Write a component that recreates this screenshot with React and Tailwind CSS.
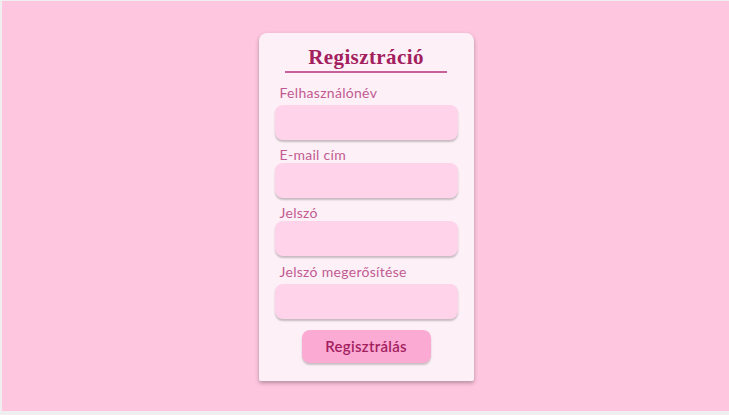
import { useState } from 'react';

const labelCls =
  "block pl-[5px] text-[14px] leading-[16px] font-normal text-[#c25a92] tracking-[0.3px]";
const inputCls =
  "block w-full h-[35px] rounded-[8px] bg-[#ffd4ea] shadow-[0_2px_2px_rgba(0,0,0,0.22)] outline-none px-3 text-[14px] text-[#a3205f]";

export default function App() {
  const [form, setForm] = useState({ user: '', email: '', pass: '', pass2: '' });

  const update = (key) => (e) => setForm({ ...form, [key]: e.target.value });

  return (
    <div className="h-[415px] w-[729px] border-t border-l-2 border-b-4 border-[#efefef] bg-[#ffc6e0] font-['Lato','Open_Sans',sans-serif]">
      <div className="flex justify-center pt-[32px] pl-[1px]">
        <div className="w-[215px] rounded-t-[8px] rounded-b-[2px] bg-[#fdf0f6] px-[16px] pt-[12px] pb-[18px] shadow-[0_2px_4px_rgba(0,0,0,0.3)]">
          {/* Title */}
          <h1 className="text-center font-['Liberation_Serif',serif] text-[21px] leading-[24px] font-bold tracking-[0.4px] text-[#a3205f]">
            Regisztráció
          </h1>
          <div className="mx-auto mt-[2px] h-[2px] w-[162px] bg-[#c8609a]" />

          <span className={`${labelCls} mt-[12px] mb-[4px]`}>Felhasználónév</span>
          <input className={inputCls} value={form.user} onChange={update('user')} />

          <span className={`${labelCls} mt-[7px]`}>E-mail cím</span>
          <input type="email" className={inputCls} value={form.email} onChange={update('email')} />

          <span className={`${labelCls} mt-[7px]`}>Jelszó</span>
          <input type="password" className={inputCls} value={form.pass} onChange={update('pass')} />

          <span className={`${labelCls} mt-[8px] mb-[4px]`}>Jelszó megerősítése</span>
          <input type="password" className={inputCls} value={form.pass2} onChange={update('pass2')} />

          <div className="mt-[11px] flex justify-center">
            <button className="h-[33px] w-[129px] rounded-[8px] bg-[#fbaad3] text-[15px] font-semibold tracking-[0.3px] text-[#a3205f] shadow-[0_2px_2px_rgba(0,0,0,0.2)]">
              Regisztrálás
            </button>
          </div>
        </div>
      </div>
    </div>
  );
}
